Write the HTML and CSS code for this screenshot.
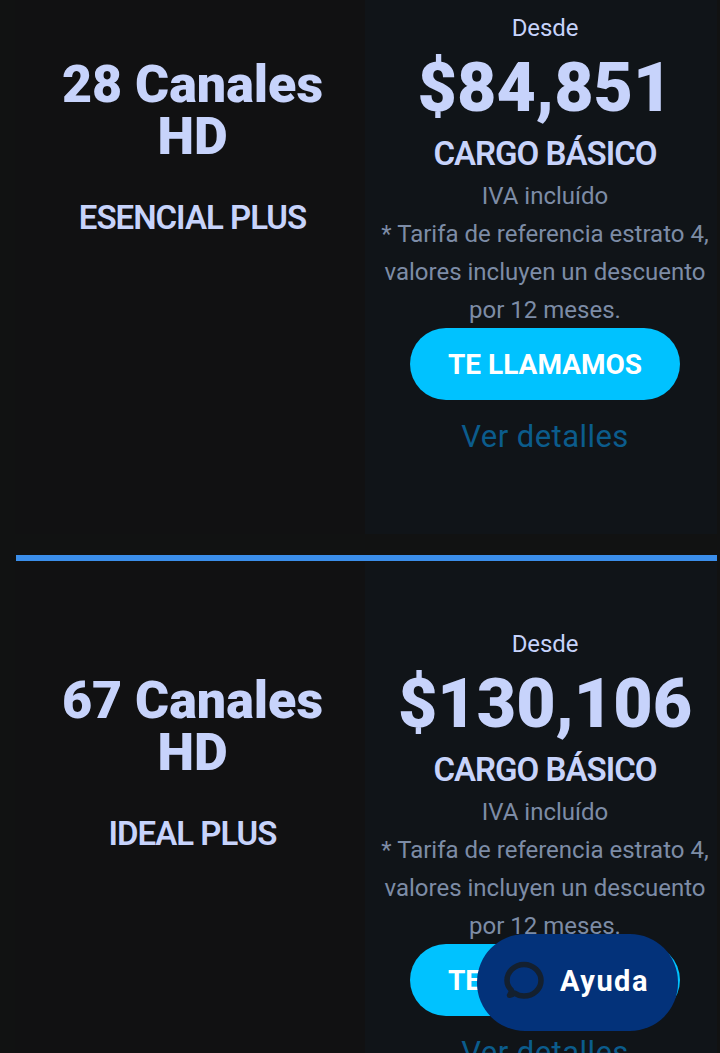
FILE: index.html
```html
<!DOCTYPE html>
<html lang="es">
<head>
<meta charset="utf-8">
<title>Planes</title>
<link rel="stylesheet" href="styles.css">
</head>
<body>
<main class="page">
  <section class="card card-first">
    <div class="info">
      <h2 class="title">28 Canales HD</h2>
      <p class="plan">ESENCIAL PLUS</p>
    </div>
    <div class="pricing">
      <p class="from">Desde</p>
      <p class="price">$84,851</p>
      <p class="charge">CARGO BÁSICO</p>
      <p class="note">IVA incluído</p>
      <p class="note">* Tarifa de referencia estrato 4, valores incluyen un descuento por 12 meses.</p>
      <a class="cta">TE LLAMAMOS</a>
      <a class="details">Ver detalles</a>
    </div>
  </section>
  <hr class="divider">
  <section class="card">
    <div class="info">
      <h2 class="title">67 Canales HD</h2>
      <p class="plan">IDEAL PLUS</p>
    </div>
    <div class="pricing">
      <p class="from">Desde</p>
      <p class="price">$130,106</p>
      <p class="charge">CARGO BÁSICO</p>
      <p class="note">IVA incluído</p>
      <p class="note">* Tarifa de referencia estrato 4, valores incluyen un descuento por 12 meses.</p>
      <a class="cta">TE LLAMAMOS</a>
      <a class="details">Ver detalles</a>
    </div>
  </section>
</main>
<button class="help">
  <svg class="help-icon" viewBox="0 0 40 40" width="40" height="40" fill="none" aria-hidden="true">
    <path d="M10.500 32c-1.300 1.200-3 2-5 2.300 1.300-1.700 2-3.300 1.900-5.100C4.500 26.300 3 23 3 19.500 3 11 10.500 3.500 20 3.500S37 11 37 19.500 29.500 35 20 35c-3.500 0-6.800-1.100-9.500-3z" stroke="#14202f" stroke-width="5.500" stroke-linejoin="round"/>
  </svg>
  <span class="help-label">Ayuda</span>
</button>
</body>
</html>
```
FILE: styles.css
```css
* {
  box-sizing: border-box;
}

html,
body {
  margin: 0;
  height: 1053px;
  overflow: hidden;
  background: #111212;
  font-family: Roboto, "Liberation Sans", sans-serif;
}

.page {
  padding: 0 3px 0 15px;
}

.card {
  display: grid;
  grid-template-columns: 350px 352px;
  height: 640px;
}

.card-first {
  height: 534px;
}

.card-first .pricing {
  padding-top: 16px;
}

.card-first .info {
  padding-top: 59px;
}

.info {
  background: #111112;
  padding: 113px 24px 0 29px;
  text-align: center;
}

.title {
  margin: 0;
  font-size: 52px;
  line-height: 52px;
  font-weight: 900;
  color: #c7d3fb;
}

.plan {
  margin: 37px 0 0;
  font-size: 33px;
  line-height: 36px;
  font-weight: 600;
  letter-spacing: -1px;
  color: #c7d3fb;
}

.pricing {
  background: #101418;
  padding: 70px 6px 0 14px;
  text-align: center;
}

.from {
  margin: 0;
  font-size: 24px;
  line-height: 24px;
  letter-spacing: -0.1px;
  color: #c7d3fb;
}

.price {
  margin: 2px 0 0;
  font-size: 68px;
  line-height: 93px;
  font-weight: 900;
  color: #c7d3fb;
}

.charge {
  margin: 1px 0 5px;
  font-size: 33px;
  line-height: 36px;
  font-weight: 600;
  letter-spacing: -1px;
  color: #c7d3fb;
}

.note {
  margin: 0;
  font-size: 24px;
  line-height: 38px;
  color: #7d8ca6;
}

.cta {
  display: flex;
  align-items: center;
  justify-content: center;
  width: 270px;
  height: 72px;
  margin: -1px auto 0;
  border-radius: 36px;
  background: #00c2ff;
  color: #fff;
  font-size: 28px;
  font-weight: 700;
}

.details {
  display: block;
  margin-top: 15px;
  font-size: 31px;
  line-height: 44px;
  letter-spacing: 0.45px;
  color: #0b5c8c;
}

.divider {
  height: 6px;
  margin: 21px 0 1px 1px;
  border: 0;
  background: #3b8eea;
}

.help {
  position: fixed;
  left: 477px;
  top: 934px;
  display: flex;
  align-items: center;
  gap: 16px;
  width: 201px;
  height: 97px;
  padding: 0 0 3px 27px;
  border: 0;
  border-radius: 48px;
  background: #03327a;
  color: #fff;
  font-family: Roboto, sans-serif;
  font-size: 29px;
  font-weight: 700;
  letter-spacing: 1.5px;
}

.help-icon {
  flex: none;
}
```
